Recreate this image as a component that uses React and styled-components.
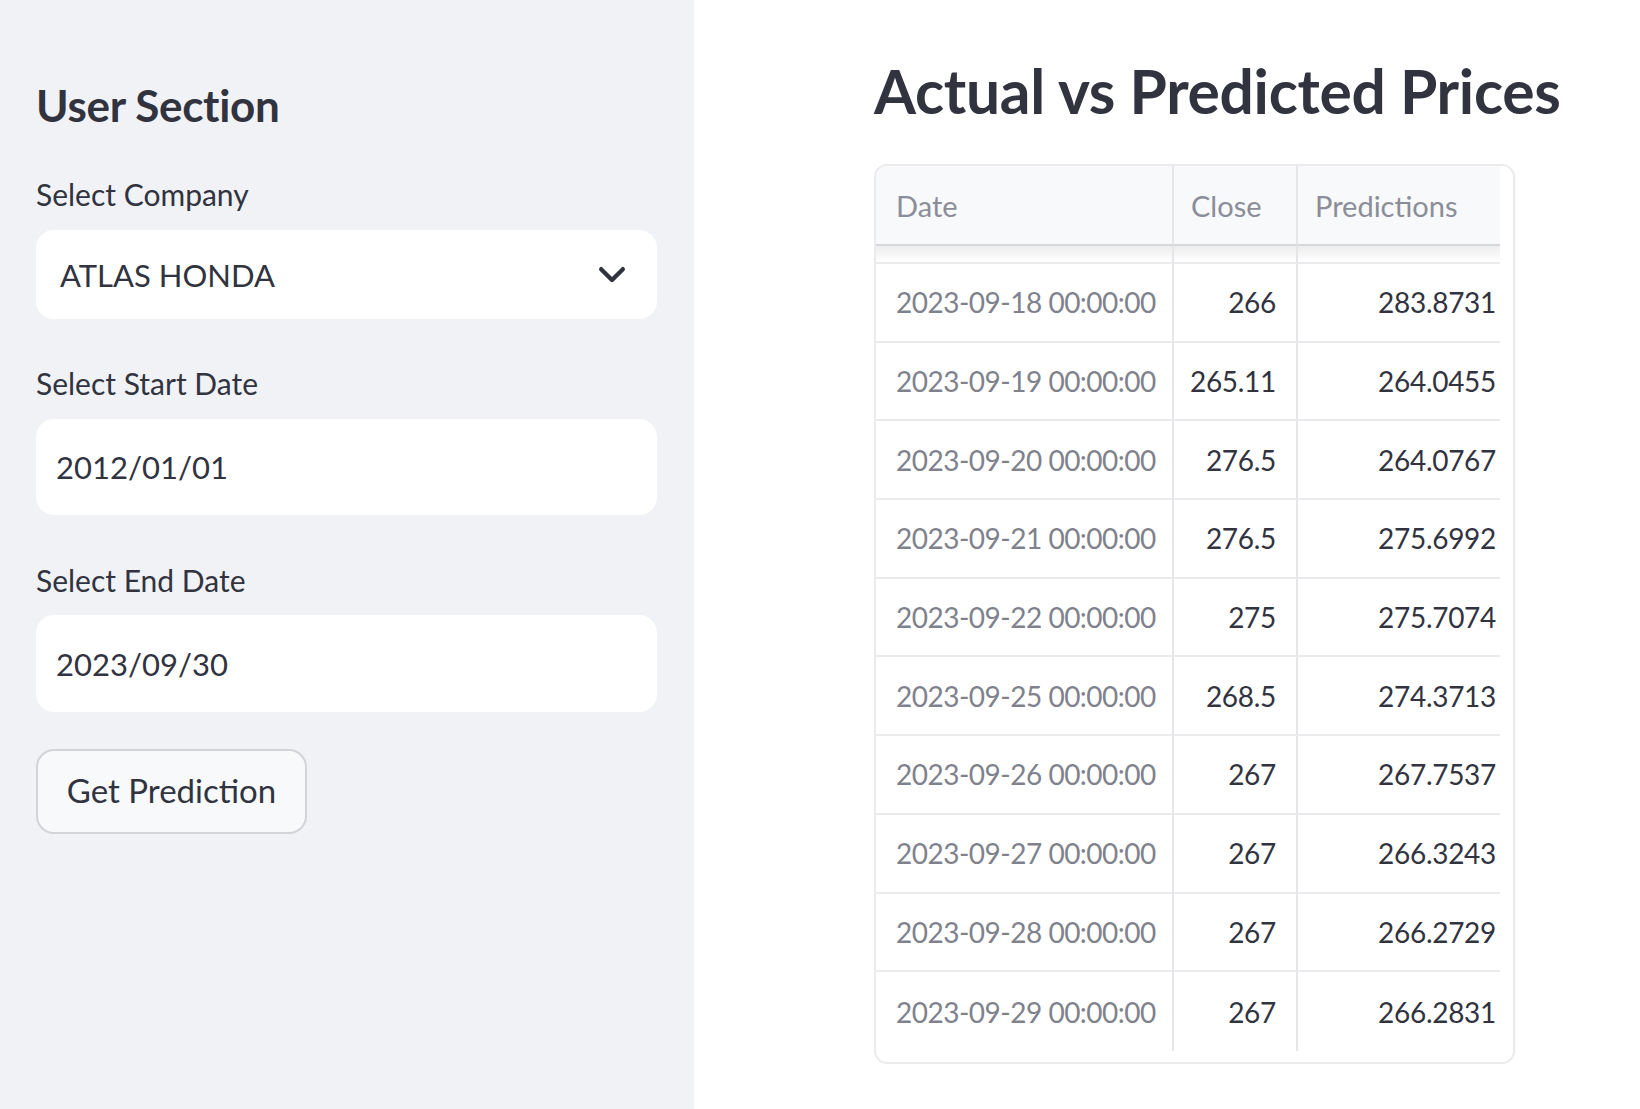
import styled, { createGlobalStyle } from 'styled-components';

const GlobalStyle = createGlobalStyle`
  html, body {
    margin: 0;
    padding: 0;
    background: #ffffff;
  }
  body {
    font-family: "Source Sans Pro", Lato, "Noto Sans", sans-serif;
    color: #31333f;
  }
`;

const Page = styled.div`
  display: flex;
  width: 1640px;
  height: 1109px;
  overflow: hidden;
`;

const Sidebar = styled.aside`
  width: 694px;
  flex-shrink: 0;
  background-color: #f0f2f6;
  padding: 79px 37px 0 36px;
  box-sizing: border-box;
  display: flex;
  flex-direction: column;
`;

const SideTitle = styled.h2`
  margin: 0;
  font-size: 44px;
  line-height: 52px;
  font-weight: 700;
  color: #31333f;
  letter-spacing: -0.3px;
`;

const Field = styled.div`
  display: flex;
  flex-direction: column;
  margin-top: ${(p) => p.$top}px;
`;

const Label = styled.label`
  font-size: 30px;
  line-height: 36px;
  color: #31333f;
  margin-bottom: ${(p) => p.$gap || 18}px;
`;

const Box = styled.div`
  display: flex;
  align-items: center;
  justify-content: space-between;
  height: ${(p) => p.$h}px;
  width: 621px;
  box-sizing: border-box;
  padding: 0 25px 0 ${(p) => p.$pl}px;
  background-color: #ffffff;
  border-radius: 18px;
  font-size: 31px;
  color: #31333f;
`;

const Button = styled.button`
  margin-top: 37px;
  align-self: flex-start;
  width: 271px;
  height: 85px;
  box-sizing: border-box;
  padding: 0 0 4px 0;
  border: 2px solid #d3d4d8;
  border-radius: 18px;
  background-color: #f8f9fb;
  font-family: inherit;
  font-size: 33px;
  color: #31333f;
`;

const Main = styled.main`
  flex: 1;
  padding: 55px 0 0 180px;
  box-sizing: border-box;
`;

const Heading = styled.h3`
  margin: 0;
  font-size: 60.5px;
  line-height: 71px;
  font-weight: 700;
  color: #31333f;
  letter-spacing: -0.3px;
  white-space: nowrap;
`;

const TableFrame = styled.div`
  margin-top: 38px;
  width: 641px;
  height: 900px;
  box-sizing: border-box;
  border: 2px solid #ebebed;
  border-radius: 13px;
  overflow: hidden;
  background: #ffffff;
`;

const Grid = styled.div`
  display: grid;
  grid-template-columns: 298px 124px 202px;
  width: 624px;
`;

const HeadCell = styled.div`
  height: 80px;
  box-sizing: border-box;
  display: flex;
  align-items: center;
  padding-left: ${(p) => p.$pl}px;
  background-color: #f8f9fb;
  border-right: ${(p) => (p.$last ? 'none' : '2px solid #e6e6e9')};
  border-bottom: 2px solid #d6d7db;
  font-size: 29px;
  color: #8b8d98;
`;

const GapCell = styled.div`
  height: 18px;
  box-sizing: border-box;
  background: linear-gradient(to bottom, rgba(0, 0, 0, 0.07), rgba(0, 0, 0, 0));
  border-right: ${(p) => (p.$last ? 'none' : '2px solid #e6e6e9')};
  border-bottom: 2px solid #ebebed;
`;

const Cell = styled.div`
  height: 78.7px;
  box-sizing: border-box;
  display: flex;
  align-items: center;
  justify-content: ${(p) => (p.$num ? 'flex-end' : 'flex-start')};
  padding: 0 ${(p) => p.$pr || 0}px 0 ${(p) => p.$pl || 0}px;
  border-right: ${(p) => (p.$last ? 'none' : '2px solid #e6e6e9')};
  border-bottom: ${(p) => (p.$end ? 'none' : '2px solid #ebebed')};
  font-size: 28px;
  letter-spacing: ${(p) => (p.$muted ? '-0.5px' : '-0.3px')};
  white-space: nowrap;
  overflow: hidden;
  color: ${(p) => (p.$muted ? '#7f828d' : '#31333f')};
`;

const Chevron = () => (
  <svg width='40' height='40' viewBox='0 0 24 24' fill='none' stroke='#31333f' strokeWidth='2.6' strokeLinecap='round' strokeLinejoin='round'>
    <path d='M5.5 8.5l6.5 6.5 6.5-6.5' />
  </svg>
);

const rows = [
  ['2023-09-18 00:00:00', '266', '283.8731'],
  ['2023-09-19 00:00:00', '265.11', '264.0455'],
  ['2023-09-20 00:00:00', '276.5', '264.0767'],
  ['2023-09-21 00:00:00', '276.5', '275.6992'],
  ['2023-09-22 00:00:00', '275', '275.7074'],
  ['2023-09-25 00:00:00', '268.5', '274.3713'],
  ['2023-09-26 00:00:00', '267', '267.7537'],
  ['2023-09-27 00:00:00', '267', '266.3243'],
  ['2023-09-28 00:00:00', '267', '266.2729'],
  ['2023-09-29 00:00:00', '267', '266.2831'],
];

const App = () => (
  <>
    <GlobalStyle />
    <Page>
      <Sidebar>
        <SideTitle>User Section</SideTitle>
        <Field $top={45}>
          <Label>Select Company</Label>
          <Box $h={89} $pl={24}>
            <span>ATLAS HONDA</span>
            <Chevron />
          </Box>
        </Field>
        <Field $top={46}>
          <Label>Select Start Date</Label>
          <Box $h={96} $pl={20}>2012/01/01</Box>
        </Field>
        <Field $top={47}>
          <Label $gap={17}>Select End Date</Label>
          <Box $h={97} $pl={20}>2023/09/30</Box>
        </Field>
        <Button>Get Prediction</Button>
      </Sidebar>
      <Main>
        <Heading>Actual vs Predicted Prices</Heading>
        <TableFrame>
          <Grid>
            <HeadCell $pl={20}>Date</HeadCell>
            <HeadCell $pl={17}>Close</HeadCell>
            <HeadCell $pl={17} $last>Predictions</HeadCell>
            <GapCell />
            <GapCell />
            <GapCell $last />
            {rows.map((r, i) => {
              const end = i === rows.length - 1;
              return [
                <Cell key={`d${i}`} $pl={20} $muted $end={end}>{r[0]}</Cell>,
                <Cell key={`c${i}`} $num $pr={20} $end={end}>{r[1]}</Cell>,
                <Cell key={`p${i}`} $num $pr={4} $last $end={end}>{r[2]}</Cell>,
              ];
            })}
          </Grid>
        </TableFrame>
      </Main>
    </Page>
  </>
);

export default App;
